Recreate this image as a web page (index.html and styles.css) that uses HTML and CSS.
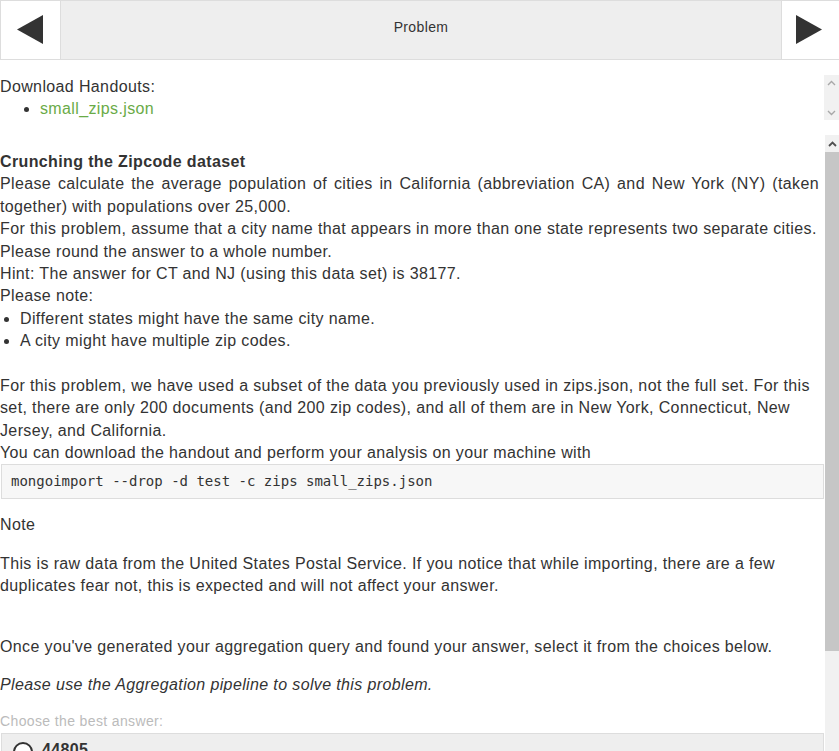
FILE: index.html
```html
<!DOCTYPE html>
<html lang="en">
<head>
<meta charset="utf-8">
<title>Problem</title>
<link rel="stylesheet" href="styles.css">
</head>
<body>
<header class="nav">
  <button class="nav-btn nav-btn--prev" aria-label="Previous">
    <svg class="nav-icon" width="59" height="58" viewBox="0 0 59 58"><polygon points="42,14 42,43 16,28.5" fill="#333"/></svg>
  </button>
  <div class="nav-title">Problem</div>
  <button class="nav-btn nav-btn--next" aria-label="Next">
    <svg class="nav-icon" width="57" height="58" viewBox="0 0 57 58"><polygon points="14,14 14,43 40,28.5" fill="#333"/></svg>
  </button>
</header>

<section class="pane pane--handouts">
  <div class="pane-body">
    <div>Download Handouts:</div>
    <ul class="handout-list">
      <li><a class="link" href="#">small_zips.json</a></li>
    </ul>
  </div>
  <div class="scrollbar scrollbar--small">
    <div class="sb-btn sb-btn--small">
      <svg width="9" height="6" viewBox="0 0 9 6"><polyline points="1,5 4.5,1.5 8,5" fill="none" stroke="#a8a8a8" stroke-width="1.4"/></svg>
    </div>
    <div class="sb-track"></div>
    <div class="sb-btn sb-btn--small">
      <svg width="9" height="6" viewBox="0 0 9 6"><polyline points="1,1 4.5,4.5 8,1" fill="none" stroke="#a8a8a8" stroke-width="1.4"/></svg>
    </div>
  </div>
</section>

<section class="pane pane--problem">
  <div class="pane-body pane-body--problem">
    <h3 class="title">Crunching the Zipcode dataset</h3>
    <div><span class="wide">Please calculate the average population of cities in California (abbreviation CA) and New York (NY) (taken</span> together) with populations over 25,000.</div>
    <div>For this problem, assume that a city name that appears in more than one state represents two separate cities.</div>
    <div>Please round the answer to a whole number.</div>
    <div>Hint: The answer for CT and NJ (using this data set) is 38177.</div>
    <div>Please note:</div>
    <ul class="bullets">
      <li>Different states might have the same city name.</li>
      <li>A city might have multiple zip codes.</li>
    </ul>
    <div>For this problem, we have used a subset of the data you previously used in zips.json, not the full set. For this set, there are only 200 documents (and 200 zip codes), and all of them are in New York, Connecticut, New Jersey, and California.</div>
    <div>You can download the handout and perform your analysis on your machine with</div>
    <pre class="code">mongoimport --drop -d test -c zips small_zips.json</pre>
    <p class="note">Note</p>
    <p class="para">This is raw data from the United States Postal Service. If you notice that while importing, there are a few duplicates fear not, this is expected and will not affect your answer.</p>
    <p class="para para--spaced">Once you've generated your aggregation query and found your answer, select it from the choices below.</p>
    <p class="para"><em>Please use the Aggregation pipeline to solve this problem.</em></p>
    <div class="choose">Choose the best answer:</div>
    <label class="answer">
      <span class="radio"></span>
      <span class="answer-text">44805</span>
    </label>
  </div>
  <div class="scrollbar scrollbar--main">
    <div class="sb-btn sb-btn--main">
      <svg width="9" height="6" viewBox="0 0 9 6"><polyline points="1,5 4.5,1.5 8,5" fill="none" stroke="#505050" stroke-width="1.8"/></svg>
    </div>
    <div class="sb-thumb"></div>
    <div class="sb-track"></div>
  </div>
</section>
</body>
</html>
```

FILE: styles.css
```css
html, body {
  margin: 0;
  height: 100%;
  overflow: hidden;
}

body {
  display: flex;
  flex-direction: column;
  background: #fff;
  color: #333;
  font-family: "Liberation Sans", Arial, sans-serif;
  font-size: 16px;
  line-height: 1.4;
  letter-spacing: 0.37px;
}

/* ---------- top navigation ---------- */
.nav {
  flex: none;
  display: flex;
  height: 60px;
  box-sizing: border-box;
  border-top: 1px solid #ddd;
  border-bottom: 1px solid #ddd;
  background: #eee;
}

.nav-btn {
  flex: none;
  margin: 0;
  padding: 0;
  border: 0;
  background: #fff;
  display: block;
  cursor: pointer;
}

.nav-btn--prev {
  width: 61px;
  border-left: 1px solid #ddd;
  border-right: 1px solid #ddd;
}

.nav-btn--next {
  width: 58px;
  border-left: 1px solid #ddd;
}

.nav-icon {
  display: block;
}

.nav-title {
  flex: 1;
  text-align: center;
  font-size: 14px;
  line-height: 20px;
  padding-top: 16px;
}

/* ---------- panes ---------- */
.pane {
  display: flex;
  margin-top: 15px;
}

.pane-body {
  flex: 1;
  min-width: 0;
}

.pane--handouts {
  flex: none;
  height: 45px;
  overflow: hidden;
}

.pane--handouts .pane-body {
  padding-top: 1px;
}

.pane--problem {
  flex: 1;
  min-height: 0;
  overflow: hidden;
}

.pane-body--problem {
  padding-top: 16px;
}

.handout-list {
  margin: 0;
  padding-left: 40px;
}

.link {
  color: #6aab47;
  text-decoration: none;
}

/* ---------- scrollbars ---------- */
.scrollbar {
  flex: none;
  display: flex;
  flex-direction: column;
  background: #f1f1f1;
}

.scrollbar--small {
  width: 15px;
}

.scrollbar--main {
  width: 14px;
}

.sb-btn {
  flex: none;
  display: flex;
  align-items: center;
  justify-content: center;
}

.sb-btn svg {
  display: block;
}

.sb-btn--small {
  height: 15px;
}

.sb-btn--main {
  height: 17px;
}

.sb-thumb {
  flex: none;
  height: 499px;
  background: #c6c6c6;
}

.sb-track {
  flex: 1;
}

/* ---------- problem content ---------- */
.title {
  margin: 0;
  font-size: 16px;
  font-weight: bold;
}

.wide {
  word-spacing: 2px;
}

.bullets {
  margin: 0 0 22.4px;
  padding-left: 20px;
}

.code {
  margin: 0 1px;
  padding: 8px 9px;
  border: 1px solid #ddd;
  background: #f7f7f7;
  color: #333;
  font-family: "DejaVu Sans Mono", "Liberation Mono", monospace;
  font-size: 14px;
  line-height: 17px;
  letter-spacing: 0;
}

.note {
  margin: 15px 0 16px;
}

.para {
  margin: 0 0 16px;
}

.para--spaced {
  margin-top: 38px;
}

.choose {
  color: #bbb;
  font-size: 14px;
}

.answer {
  display: flex;
  align-items: flex-start;
  gap: 9px;
  margin: 1px 1px 0;
  padding: 5px 11px 12px;
  border: 1px solid #ddd;
  background: #eee;
}

.radio {
  flex: none;
  width: 16px;
  height: 16px;
  margin-top: 3px;
  border: 2px solid #333;
  border-radius: 50%;
  background: #fff;
}

.answer-text {
  font-weight: bold;
}
```
